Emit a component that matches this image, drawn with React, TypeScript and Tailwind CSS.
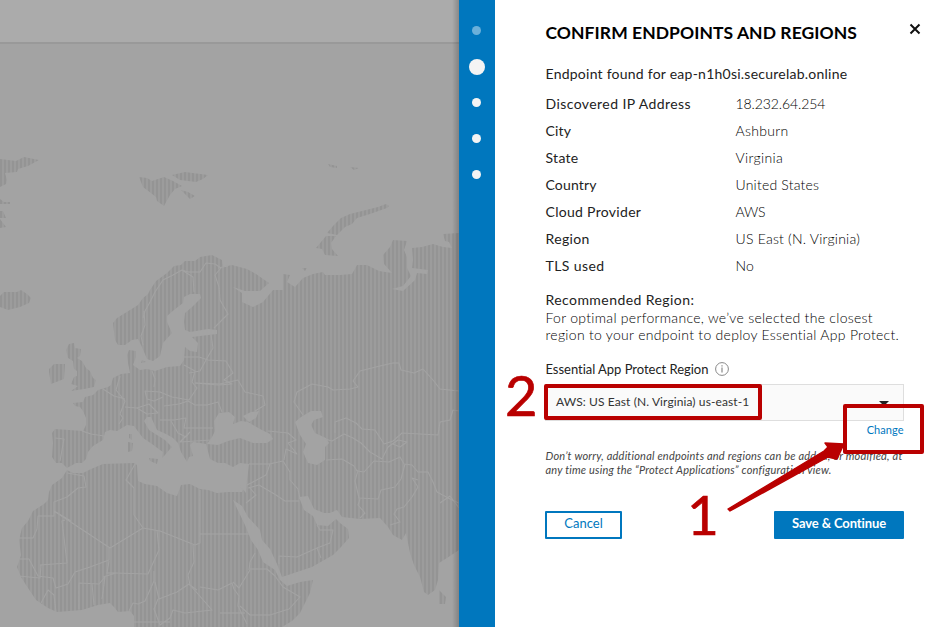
import React from "react";

const LAND = [
  // Eurasia and Africa
  "M117 318 113 323 115 340 118 345 125 345 132 340 138 339 142 347 147 359 153 361 160 356 163 343 172 333 167 322 167 316 174 310 183 303 184 297 190 294 200 294 201 298 192 307 185 313 184 322 185 330 190 332 208 329 217 330 217 334 200 336 192 337 198 343 197 352 190 351 185 347 184 360 180 366 167 367 155 371 147 369 140 370 133 365 136 357 136 351 129 350 127 355 128 363 130 373 121 374 113 378 111 385 108 387 98 390 93 395 85 397 83 402 73 403 75 406 80 407 83 411 86 418 86 425 83 431 55 429 52 433 53 443 52 457 56 463 62 463 67 468 76 463 82 463 86 459 88 452 93 446 103 440 105 432 110 430 117 431 127 425 134 426 143 438 152 444 160 450 163 452 162 458 165 455 170 449 172 447 165 440 157 435 149 430 144 421 147 417 151 417 157 430 166 434 173 438 178 443 181 452 187 462 189 457 193 456 190 445 193 442 200 443 206 444 210 459 218 463 225 463 233 467 240 463 249 464 247 480 242 492 228 492 217 493 208 490 200 489 190 484 181 485 177 496 167 493 157 486 145 484 138 481 137 465 134 463 103 464 91 469 83 473 73 473 67 470 62 478 52 485 49 492 48 500 44 504 33 511 28 521 22 528 19 540 21 555 17 567 21 577 26 585 36 600 48 608 57 612 82 610 98 605 110 603 114 607 118 612 130 611 134 616 134 627H282L292 621 300 613 310 593 313 580 300 582 287 586 280 580 275 570 263 562 258 550 251 540 245 525 233 500 242 506 248 517 260 530 262 540 270 549 277 564 282 577 300 571 312 567 333 555 341 547 349 538 348 529 340 523 336 519 328 526 317 525 313 516 304 510 299 497 308 496 314 509 324 513 330 513 337 510 342 517 360 519 380 518 388 527 393 535 402 540 406 533 410 553 414 565 420 577 424 592 428 595 435 590 438 580 439 563 447 558 459 550V233L443 234 445 241 449 242 452 248 443 247 433 244 422 247 412 248 413 260 412 268 420 269 428 270 427 274 417 273 415 280 403 291 392 289 403 286 411 276 407 268 407 257 404 250 407 241 393 240 390 247 383 255 384 264 392 273 379 271 367 265 357 265 352 274 340 275 325 275 323 272 313 274 303 278 295 287 287 282 290 275 283 274 283 290 273 290 263 302 253 307 242 302 242 293 233 287 245 291 260 291 269 283 256 274 247 269 232 265 223 267 222 260 212 255 200 257 195 261 185 261 181 265 174 266 167 273 156 281 150 290 148 294 143 298 138 305 130 310Z",
  // Great Britain, Ireland and Iceland
  "M69 344 74 343 75 348 81 349 80 356 77 358 82 361 86 368 90 371 93 378 96 380 94 387 84 389 71 391 78 386 71 384 74 377 77 376 77 371 74 369 73 361 68 358 66 350Z",
  "M54 364 65 364 64 379 51 384 49 372 49 369Z M0 296 4 292 17 292 21 290 27 294 31 298 29 303 20 307 8 310 0 307Z",
  // Arctic islands
  "M0 159 16 161 24 157 39 160 28 166 18 169 17 172 5 173 7 180 6 184 0 187Z M0 199 4 202 10 202 10 204 0 204Z M0 211H3L6 218H0Z M0 219 6 227 0 228Z",
  "M139 177 147 178 152 181 164 177 173 181 182 186 175 189 170 195 164 206 157 201 156 197 143 187Z M172 175 185 172 208 175 203 179 196 182 180 180Z M181 190 188 192 195 196 190 199Z M328 164 337 166 337 168 330 167Z M350 167 359 168 354 170Z",
  "M386 204 389 206 387 208 370 214 357 218 352 224 345 227 337 235 327 233 333 226 341 218 350 214 366 210 378 207Z M326 236 336 236 331 243 332 249 338 256 325 255 322 249 316 248Z M302 268 307 268 305 271Z",
  // Mediterranean islands, Denmark and Sri Lanka
  "M129 434H132V440L129 438Z M128 442 133 443 132 451 128 452Z M149 458 158 459 157 464 150 461Z M142 360 146 362 141 363Z M439 590 446 597 445 604 439 604Z",
];

const SEAS = [
  // Black Sea and Sea of Azov
  "M219 413 229 412 235 417 233 424 241 421 248 422 260 429 270 434 273 439 267 443 253 443 240 438 228 441 218 445 207 444 212 437 215 431 214 421Z M243 416 251 412 259 411 256 418 249 422Z",
  // Caspian Sea and inland lakes
  "M295 422 301 417 311 411 321 411 323 417 314 420 311 425 315 433 326 438 329 443 325 447 325 460 317 465 308 463 303 452 306 444 300 435Z M240 486 247 481 246 493Z",
];

const BORDERS = [
  "M143 318 145 311 150 302 155 292 163 280 173 275 182 270 188 272 200 272 206 263 215 264 221 268 215 275 219 287 220 300 228 314 214 328",
  "M144 311 145 325 141 336 143 345 M182 270 193 277 194 292 M218 268 228 266",
  "M184 357 199 357 208 360 226 361 233 373 224 380 232 384 218 385 195 383 M211 335 213 348 206 360 200 371 189 373 M184 365 195 371 192 382 197 388 189 400 172 397 160 392 145 391 147 399 154 401 163 397",
  "M152 371 155 379 154 387 M120 376 116 390 125 401 120 414 123 418 119 424 M103 389 114 396 125 399 M82 431 91 434 104 436 M55 438 64 439 60 461",
  "M125 407 137 408 149 404 158 413 147 414 137 408 M164 406 179 404 188 401 195 405 207 405 218 402 222 412 M160 420 174 420 186 418 184 428 213 428 M171 421 178 433 186 437 190 432 180 442 211 440",
  "M195 383 220 384 238 380 245 392 263 396 265 405 255 411",
  "M303 415 294 402 297 392 312 384 328 387 333 390 350 389 358 387 353 381 360 371 380 366 393 363 399 363 401 370 414 373 423 369 433 380 440 389 459 391",
  "M335 433 335 422 346 418 356 423 362 429 375 430 384 444 393 441 402 433 438 435 440 422 450 420 453 410 459 411",
  "M325 439 332 441 344 434 353 438 361 443 370 452 382 459 388 447 398 440 407 442 400 447 393 444 M268 431 288 433 296 440 288 443 297 454 286 449 284 460",
  "M249 464 269 464 283 461 290 472 290 480 298 489 300 499 M270 464 266 475 247 485 M248 488 259 485 276 495 285 501 299 501 M249 487 256 495 246 503",
  "M326 460 342 459 354 466 357 471 364 472 374 461 389 462 400 457 404 464 412 465 418 472 428 472 433 482 437 492 450 499 459 503 M358 470 355 481 359 498 378 499 381 490 395 487 401 479 405 464",
  "M360 499 358 505 365 513 360 518 M418 480 412 478 418 487 412 497 404 507 397 509 394 514 400 522 390 525 M440 503 450 496 459 508",
  "M67 473 84 476 86 487 78 488 67 497 54 502V516H38L37 529 33 538H18 M54 511 110 548 143 528 160 531 195 545 200 543V490",
  "M135 464 126 480 134 488 134 515 143 528 M200 534H250 M65 520 62 521 67 563 40 565 M54 511 71 521 M193 545 194 562 188 575 190 585 197 590",
  "M109 548 109 560 90 567 75 572 68 584 56 588 53 578 38 576 29 559 20 559 M18 576 40 578 41 565 M109 561 107 573 115 573 148 574 159 550 157 530",
  "M56 612 54 595 48 590 41 603 M79 609 79 583 99 584 105 577 102 599 M92 584 94 605 M103 577 116 573",
  "M154 571 154 581 145 601 138 604 133 603 129 611 M155 582 159 599 177 592 189 584 198 594 212 610 185 613 173 610 170 618 160 625 154 609 158 599 M133 622H170",
  "M200 587 218 590 232 583 234 589 239 596 238 606 247 624 M250 570 239 588 233 582 M249 570 250 562 255 553 M250 569 267 569 275 576 283 587 300 597 289 609 270 615 250 615 240 606 M220 613H245",
  "M279 564 279 556 297 557 317 548 330 543 333 530 320 530 317 525 M317 548 321 558",
];

const DETAILS = [
  ["Discovered IP Address", "18.232.64.254", "tracking-[0.42px]", "tracking-[-0.1px]"],
  ["City", "Ashburn", "tracking-[0.15px]", "tracking-[0.3px]"],
  ["State", "Virginia", "tracking-[0.3px]", "tracking-[0.35px]"],
  ["Country", "United States", "tracking-[0.15px]", "tracking-[0.2px]"],
  ["Cloud Provider", "AWS", "tracking-[0.3px]", "tracking-[-0.2px]"],
  ["Region", "US East (N. Virginia)", "tracking-[0.35px]", "tracking-[0.23px]"],
  ["TLS used", "No", "tracking-[0.4px]", "tracking-[0.1px]"],
];

function WorldMap() {
  return (
    <svg className="block h-[583px] w-[459px]" viewBox="0 44 459 583" aria-hidden="true">
      <defs>
        <pattern id="stripes" width="4" height="8" patternUnits="userSpaceOnUse">
          <rect width="4" height="8" fill="#9c9c9c" />
          <rect width="2" height="8" fill="#949494" />
        </pattern>
      </defs>
      {LAND.map((d) => (
        <path key={d} d={d} fill="url(#stripes)" />
      ))}
      {SEAS.map((d) => (
        <path key={d} d={d} fill="#a3a3a3" />
      ))}
      {BORDERS.map((d) => (
        <path key={d} d={d} fill="none" stroke="#a3a3a3" strokeWidth="1.1" strokeLinejoin="round" />
      ))}
    </svg>
  );
}

function Backdrop() {
  return (
    <div className="relative w-[459px] shrink-0 bg-[#a3a3a3]">
      <div className="h-[44px] border-b-2 border-[#999999] bg-[#ababab]" />
      <WorldMap />
      <div className="absolute inset-y-0 right-0 w-[7px] bg-linear-to-r from-transparent to-black/20" />
    </div>
  );
}

function Steps() {
  return (
    <div className="flex w-9 shrink-0 flex-col items-center bg-[#0077be] pr-px pt-[13px]">
      <div className="flex h-9 items-center pb-px"><span className="size-[9px] rounded-full bg-[#6bb0da]" /></div>
      <div className="flex h-9 items-center"><span className="-mr-px size-4 rounded-full bg-[#f4f4f4]" /></div>
      <div className="flex h-9 items-center pb-px"><span className="size-[9px] rounded-full bg-[#f4f4f4]" /></div>
      <div className="flex h-9 items-center pb-px"><span className="size-[9px] rounded-full bg-[#f4f4f4]" /></div>
      <div className="flex h-9 items-center pb-px"><span className="size-[9px] rounded-full bg-[#f4f4f4]" /></div>
    </div>
  );
}

function Annotations() {
  return (
    <div className="pointer-events-none absolute inset-0 text-[#b90000]">
      <div className="absolute left-[544px] top-[384px] h-[36px] w-[218px] rounded-[2px] border-4 border-[#b90000]" />
      <div className="absolute left-[843px] top-[404px] h-[50px] w-[81px] rounded-[2px] border-4 border-[#b90000]" />
      <span className="absolute left-[505px] top-[363px] text-[56px] leading-[64px] [-webkit-text-stroke:0.7px_#b90000]">2</span>
      <span className="absolute left-[687px] top-[482px] text-[55px] leading-[64px] [-webkit-text-stroke:0.7px_#b90000]">1</span>
      <svg className="absolute left-[720px] top-[435px]" width="130" height="80" viewBox="720 435 130 80">
        <path d="M728 509 824 451 828 447 825 443 844 444 837 459 832 458 828 457 730 511Z" fill="#b90000" stroke="#b90000" strokeWidth="1.4" strokeLinejoin="round" />
      </svg>
    </div>
  );
}

export default function App() {
  return (
    <div className="relative flex h-[627px] w-[951px] overflow-hidden bg-white font-['Lato',sans-serif] text-[#222222]">
      <Backdrop />
      <Steps />
      <main className="flex w-[456px] min-w-0 flex-col pl-[50.5px] pr-[47px]">
        <header className="flex h-[61px] shrink-0 items-start justify-between pt-[21px]">
          <h1 className="whitespace-nowrap text-[17.5px] font-bold leading-6 tracking-[0.06px] text-black">CONFIRM ENDPOINTS AND REGIONS</h1>
          <button aria-label="Close" className="-mr-[17px] mt-[2px]">
            <svg width="12" height="12" viewBox="0 0 12 12"><path d="M1.5 1.5 10.5 10.5M10.5 1.5 1.5 10.5" stroke="#111" strokeWidth="2" /></svg>
          </button>
        </header>
        <p className="h-[29px] whitespace-nowrap text-[14px] leading-[25px] tracking-[0.24px]">Endpoint found for eap-n1h0si.securelab.online</p>
        <dl>
          {DETAILS.map(([label, value, labelTracking, valueTracking]) => (
            <div key={label} className="flex h-[27px] items-center text-[14px]">
              <dt className={`w-[190px] ${labelTracking}`}>{label}</dt>
              <dd className={`font-light text-black ${valueTracking}`}>{value}</dd>
            </div>
          ))}
        </dl>
        <section className="mt-3 whitespace-nowrap text-[14px] leading-[17.5px]">
          <h2 className="tracking-[0.43px]">Recommended Region:</h2>
          <p className="font-light tracking-[0.29px] text-black">For optimal performance, we’ve selected the closest<br />region to your endpoint to deploy Essential App Protect.</p>
        </section>
        <div className="mt-4 flex h-5 items-center gap-[7px]">
          <span className="text-[13px] tracking-[-0.03px]">Essential App Protect Region</span>
          <svg className="-mt-px" width="14" height="14" viewBox="0 0 14 14" fill="none" stroke="#888"><circle cx="7" cy="7" r="6.4" /><path d="M7 5.6v5" strokeWidth="1.2" /><path d="M7 3.2v1.3" strokeWidth="1.2" /></svg>
        </div>
        <div className="-ml-px mt-1 flex h-[37px] shrink-0 items-center justify-between border border-[#dedede] bg-[#fafafa] pl-[10.5px] pr-[14px]">
          <span className="pb-px text-[12px] tracking-[0.1px] text-[#333333]">AWS: US East (N. Virginia) us-east-1</span>
          <svg className="mt-[3px]" width="10" height="5" viewBox="0 0 10 5"><path d="M0 0h10L5 5z" fill="#222" /></svg>
        </div>
        <a className="mr-[0.5px] h-[18px] self-end text-[11px] leading-[18px] tracking-[0.05px] text-[#0077be]">Change</a>
        <p className="mt-[10px] h-[28px] whitespace-nowrap text-[11px] italic leading-[14px] tracking-[0.2px] text-[#444444]">Don’t worry, additional endpoints and regions can be added, or modified, at<br />any time using the “Protect Applications” configuration view.</p>
        <footer className="-ml-[0.5px] mt-[34px] flex justify-between">
          <button className="h-7 w-[77px] rounded-[1px] border-2 border-[#0077be] pb-[2px] text-[13px] leading-none text-[#0077be]">Cancel</button>
          <button className="h-7 w-[130px] rounded-[1px] bg-[#0077be] pb-[2px] text-[13px] font-bold leading-none tracking-[-0.12px] text-white">Save &amp; Continue</button>
        </footer>
      </main>
      <Annotations />
    </div>
  );
}
